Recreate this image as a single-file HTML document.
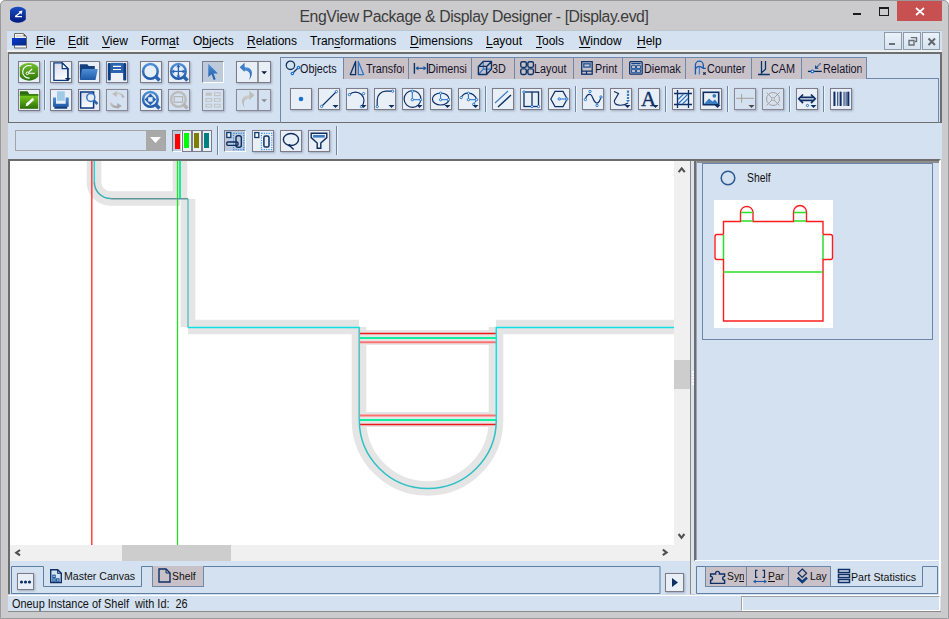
<!DOCTYPE html>
<html><head><meta charset="utf-8"><style>
*{box-sizing:border-box}
html,body{margin:0;padding:0;width:949px;height:619px;overflow:hidden;background:#fff}
body{font-family:"Liberation Sans",sans-serif;position:relative}
.a{position:absolute}
#frame{left:0;top:0;width:949px;height:619px;background:#cbcbcd;border:1px solid #9a9a9c;border-radius:5px 5px 0 0}
#title{left:299.5px;top:8px;font-size:15.8px;color:#3c3c3c;letter-spacing:-0.42px;white-space:nowrap}
.mb{top:34px;font-size:12px;color:#000;line-height:14px}
.mb u{text-decoration:underline;text-decoration-thickness:1px;text-underline-offset:1.5px}
#menubar{left:7px;top:30px;width:935px;height:22px;background:#d3e1f0;border-top:1px solid #bcc4cc}
#menubar:after{content:"";position:absolute;left:0;top:19px;width:100%;height:2px;background:#eef0f2}
.mdi{top:32px;width:18px;height:18px;border:1px solid #8e9aa8;background:linear-gradient(#eaf2fa,#d6e3f0)}
#tb1{left:8px;top:52px;width:934px;height:71px;background:#d3e1f0;border-top:2px solid #6e6e6e;border-left:1px solid #6e6e6e;border-right:2px solid #6e6e6e;border-bottom:1px solid #6e6e6e}
#tb2{left:8px;top:123px;width:934px;height:36px;background:#d3e1f0}
.btn{width:22px;height:22px;border:1px solid #7d7b88;background:#e8eff7;box-shadow:1px 1px 2px rgba(60,60,90,.32)}
.dis{background:#d3e1f0;border-color:#8a8894}
.prs{background:#bdcadb;border-top:1px solid #7d7b88;border-left:1px solid #7d7b88;border-right:1px solid #fff;border-bottom:1px solid #fff;box-shadow:none}
.sep{width:2px;background:#6f87a6;border-right:1px solid #eef3f8}
.btn svg{position:absolute;left:0;top:0}
.tab{top:57px;height:22px;background:#c9c1c8;border:1px solid #6d88a8;border-bottom:none;font-size:11.5px;color:#1a1a2a;white-space:nowrap;overflow:hidden}
.tabt{top:61px;height:16px;font-size:12px;color:#141428;white-space:nowrap;overflow:hidden;line-height:16px;transform:scaleX(0.9);transform-origin:0 0}
.tab svg{position:absolute;top:3px}
#canvas{left:9px;top:159px;width:682px;height:403px;background:#fff;border-top:2px solid #6e6e6e;border-left:1px solid #6e6e6e}
#rp{left:694px;top:159px;width:247px;height:402px;background:#d3e1f0}
.tabb{height:21px;background:#c9c1c8;border:1px solid #6d88a8;border-top:none;font-size:11px;color:#1a1a2a;white-space:nowrap;overflow:hidden}
.tabb span{position:absolute;top:4px}
</style></head><body>
<div id="frame" class="a"></div>
<div id="title" class="a">EngView Package &amp; Display Designer - [Display.evd]</div>
<svg class="a" style="left:9px;top:6px" width="18" height="18" viewBox="0 0 18 18">
<defs><linearGradient id="gi" x1="0" y1="0" x2="0" y2="1"><stop offset="0" stop-color="#1a4cc0"/><stop offset="1" stop-color="#001a80"/></linearGradient></defs>
<path d="M1 4A11.3 11.3 0 0 1 16.8 4V13.6A11.3 11.3 0 0 1 1 13.6Z" fill="url(#gi)"/><path d="M6.2 10.6L11.4 6.6M6 10.6H13" stroke="#fff" stroke-width="1.3" fill="none"/><path d="M13.4 4.6L9.6 5.5 12.5 8.4z" fill="#fff"/></svg>
<div class="a" style="left:853px;top:13px;width:8px;height:2px;background:#1a1a1a"></div>
<div class="a" style="left:879px;top:7px;width:10px;height:9px;border:1px solid #1a1a1a;border-top-width:2px"></div>
<div class="a" style="left:897px;top:1px;width:45px;height:20px;background:#c75050"></div>
<svg class="a" style="left:914px;top:6px" width="12" height="11"><path d="M2 2l8 7M10 2l-8 7" stroke="#fff" stroke-width="1.7"/></svg>

<div id="menubar" class="a"></div>
<svg class="a" style="left:12px;top:33px" width="17" height="16" viewBox="0 0 17 16">
<path d="M2.5 0.5h9l3 3v11.5h-12z" fill="#f4f4f4" stroke="#6a6a6a"/>
<path d="M11.5 0.5v3h3z" fill="#555"/>
<rect x="4" y="2" width="7" height="2" fill="#d8d8d8"/>
<defs><linearGradient id="gm" x1="0" y1="0" x2="1" y2="1"><stop offset="0" stop-color="#0a3ad0"/><stop offset="1" stop-color="#062a80"/></linearGradient></defs>
<rect x="0" y="5" width="14" height="7.5" fill="url(#gm)"/>
</svg>
<div class="a mb" style="left:36px"><u>F</u>ile</div>
<div class="a mb" style="left:68px"><u>E</u>dit</div>
<div class="a mb" style="left:102px"><u>V</u>iew</div>
<div class="a mb" style="left:141px">Form<u>a</u>t</div>
<div class="a mb" style="left:193px">O<u>b</u>jects</div>
<div class="a mb" style="left:247px"><u>R</u>elations</div>
<div class="a mb" style="left:310px">Tran<u>s</u>formations</div>
<div class="a mb" style="left:410px"><u>D</u>imensions</div>
<div class="a mb" style="left:486px"><u>L</u>ayout</div>
<div class="a mb" style="left:536px"><u>T</u>ools</div>
<div class="a mb" style="left:579px"><u>W</u>indow</div>
<div class="a mb" style="left:637px"><u>H</u>elp</div>
<div class="a mdi" style="left:884px"><div class="a" style="left:4px;top:10px;width:6px;height:2px;background:#6a6f78"></div></div>
<div class="a mdi" style="left:903px"><svg class="a" style="left:4px;top:4px" width="10" height="10"><path d="M3.5 1v-0.5h5v4h-1.5M1 3.5h5v4.5h-5z" fill="none" stroke="#6a6f78" stroke-width="1.4"/></svg></div>
<div class="a mdi" style="left:922px"><svg class="a" style="left:4px;top:4px" width="10" height="10"><path d="M1.5 1.5l6.5 6.5M8 1.5l-6.5 6.5" stroke="#5f646c" stroke-width="1.9"/></svg></div>
<div id="tb1" class="a"></div><div id="tb2" class="a"></div>
<svg class="a" width="0" height="0" style="left:0;top:0"><defs><linearGradient id="gB" x1="0" y1="0" x2="0" y2="1"><stop offset="0" stop-color="#4f8fd6"/><stop offset="1" stop-color="#1f5aa8"/></linearGradient><linearGradient id="gG" x1="0" y1="0" x2="0" y2="1"><stop offset="0" stop-color="#74c22e"/><stop offset="1" stop-color="#2a7208"/></linearGradient><linearGradient id="gG2" x1="0" y1="0" x2="0" y2="1"><stop offset="0" stop-color="#7ad21e"/><stop offset="1" stop-color="#2b6e06"/></linearGradient><linearGradient id="gP" x1="0" y1="0" x2="0.3" y2="1"><stop offset="0" stop-color="#d6d8ec"/><stop offset="1" stop-color="#fafbff"/></linearGradient><linearGradient id="gS" x1="0" y1="0" x2="0" y2="1"><stop offset="0" stop-color="#cfcfcf"/><stop offset="1" stop-color="#a9a9a9"/></linearGradient></defs></svg>
<div class="a btn " style="left:18px;top:61px;width:22px"><svg width="20" height="20" viewBox="0 0 20 20"><path d="M0.8 5.3A11.9 11.9 0 0 1 19.2 5.3V14.4A11.9 11.9 0 0 1 0.8 14.4Z" fill="url(#gG)"/><path d="M12.6 4.1A6.3 6.3 0 1 0 10.6 16.1" fill="none" stroke="#fff" stroke-width="1.1"/><path d="M8.6 11.2L13.2 7M8.6 11.2H15.8" stroke="#fff" stroke-width="1.1"/><circle cx="8.4" cy="11.3" r="1.3" fill="#4a9a18" stroke="#fff" stroke-width="1"/></svg></div>
<div class="a btn " style="left:18px;top:89px;width:22px"><svg width="20" height="20" viewBox="0 0 20 20"><path d="M0.9 1.3h7.6l1.8 2.6h8.9v2.4H0.9z" fill="#2c6a0c"/><rect x="0.9" y="4.6" width="18.3" height="14.2" fill="url(#gG2)"/><rect x="0.9" y="4.4" width="18.3" height="1.3" fill="#2f6f0e"/><path d="M7.6 15L14.4 8.8" stroke="#fff" stroke-width="2.6"/><path d="M6.6 16.2l0.6-2 1.5 1.4z" fill="#fff"/></svg></div>
<div class="a sep" style="left:44px;top:60px;height:50px"></div>
<div class="a btn " style="left:50px;top:61px;width:22px"><svg width="20" height="20" viewBox="0 0 20 20"><path d="M2.9 0.9h8.3l5.7 5.7v11.8H2.9z" fill="url(#gP)" stroke="#0d3a7e" stroke-width="1.3"/><path d="M11.2 0.9v5.7h5.7z" fill="#fff" stroke="#0d3a7e" stroke-width="1.2"/><path d="M16.9 6.6v10" stroke="#0d3a7e" stroke-width="1.3"/><path d="M13.8 16h6.2l-3.1 3z" fill="#0d2a5e"/></svg></div>
<div class="a btn " style="left:78px;top:61px;width:22px"><svg width="20" height="20" viewBox="0 0 20 20"><path d="M0.9 2.2h7.4l1.5 1.8h6v3.5H0.9z" fill="#14407f"/><path d="M0.9 4h3v13H0.9z" fill="#14407f"/><path d="M3.1 7h15.7l-2.3 10.9H1z" fill="url(#gB)"/></svg></div>
<div class="a btn " style="left:106px;top:61px;width:22px"><svg width="20" height="20" viewBox="0 0 20 20"><rect x="0.8" y="0.9" width="3.1" height="17.5" rx="1" fill="#0f3f86"/><rect x="16.1" y="0.9" width="3.1" height="17.5" rx="1" fill="#0f3f86"/><rect x="3.9" y="0.9" width="12.2" height="10.1" fill="#2a64b0"/><path d="M6 4.4h8M6 7.5h8" stroke="#fff" stroke-width="1.2"/><rect x="3.9" y="11" width="12.2" height="7.4" fill="#eef2f8"/></svg></div>
<div class="a btn " style="left:50px;top:89px;width:22px"><svg width="20" height="20" viewBox="0 0 20 20"><rect x="6" y="1.3" width="7.8" height="9.5" fill="#9fcbe6"/><path d="M2 7.4h3v6.3h9.7V7.4h3v9.4H2z" fill="url(#gB)"/><rect x="3.4" y="16.4" width="12.8" height="2.3" fill="#0d3a80"/></svg></div>
<div class="a btn " style="left:78px;top:89px;width:22px"><svg width="20" height="20" viewBox="0 0 20 20"><rect x="1.6" y="2" width="13" height="16" fill="url(#gP)" stroke="#0d3a7e" stroke-width="1.5"/><circle cx="11.8" cy="7.4" r="4" fill="#e8eef8" stroke="#3a78c0" stroke-width="1.5"/><path d="M14.8 10.4l3.6 3.6" stroke="#2a64b0" stroke-width="2.6"/></svg></div>
<div class="a btn dis" style="left:106px;top:89px;width:22px"><svg width="20" height="20" viewBox="0 0 20 20"><path d="M16.4 7.4C15 3.6 11.5 2.6 8.6 3.6" fill="none" stroke="url(#gS)" stroke-width="2.4"/><path d="M5.2 4.1l4.6-3.2v6.2z" fill="#bdbdbd"/><path d="M3.6 12.6C5 16.4 8.5 17.4 11.4 16.4" fill="none" stroke="url(#gS)" stroke-width="2.4"/><path d="M14.8 15.9l-4.6 3.2v-6.2z" fill="#a9a9a9"/></svg></div>
<div class="a btn " style="left:140px;top:61px;width:22px"><svg width="20" height="20" viewBox="0 0 20 20"><circle cx="9.4" cy="9.4" r="7.3" fill="#e6eef8" stroke="url(#gB)" stroke-width="2.5"/><path d="M14.3 14.3l4.2 4.2" stroke="#2a64b0" stroke-width="3.6"/></svg></div>
<div class="a btn " style="left:168px;top:61px;width:22px"><svg width="20" height="20" viewBox="0 0 20 20"><circle cx="9.4" cy="9.4" r="7.3" fill="#e6eef8" stroke="url(#gB)" stroke-width="2.5"/><path d="M14.3 14.3l4.2 4.2" stroke="#2a64b0" stroke-width="3.6"/><path d="M9.4 3.5v12M3.5 9.4h12" stroke="#2a64b0" stroke-width="1.3"/><path d="M9.4 2.6l-2 2.6h4zM9.4 16.2l-2-2.6h4zM2.6 9.4l2.6-2v4zM16.2 9.4l-2.6-2v4z" fill="#2a64b0"/></svg></div>
<div class="a btn " style="left:140px;top:89px;width:22px"><svg width="20" height="20" viewBox="0 0 20 20"><circle cx="9.4" cy="9.4" r="7.3" fill="#e6eef8" stroke="url(#gB)" stroke-width="2.5"/><path d="M14.3 14.3l4.2 4.2" stroke="#2a64b0" stroke-width="3.6"/><path d="M9.4 3.6l5.8 5.8-5.8 5.8-5.8-5.8z" fill="#2a64b0"/><rect x="7.2" y="7.2" width="4.4" height="4.4" fill="#e6eef8"/></svg></div>
<div class="a btn dis" style="left:168px;top:89px;width:22px"><svg width="20" height="20" viewBox="0 0 20 20"><circle cx="9.4" cy="9.4" r="7.3" fill="none" stroke="#bdbdbd" stroke-width="2.5"/><path d="M14.3 14.3l4.2 4.2" stroke="#b3b3b3" stroke-width="3.6"/><rect x="5.2" y="6.6" width="8.4" height="5.6" fill="none" stroke="#b5b5b5" stroke-width="1.2"/></svg></div>
<div class="a btn prs" style="left:202px;top:61px;width:22px"><svg width="20" height="20" viewBox="0 0 20 20"><path d="M5.3 1.8L14.9 11.4H10.6L12.6 17.2L10.7 18L8.6 12.3L5.3 14.9z" fill="url(#gB)"/></svg></div>
<div class="a btn dis" style="left:202px;top:89px;width:22px"><svg width="20" height="20" viewBox="0 0 20 20"><rect x="2.6" y="2.6" width="6.2" height="3.2" fill="#c2c2c2"/><path d="M11.5 2.8h5.6v2.8h-5.6zM3 8.5h5.6v2.8H3zM11.5 8.5h5.6v2.8h-5.6zM3 14.2h5.6v2.8H3zM11.5 14.2h5.6v2.8h-5.6z" fill="none" stroke="#c2c2c2" stroke-width="1.1"/></svg></div>
<div class="a btn" style="left:236px;top:61px;width:35px"><svg width="33" height="20"><path d="M7 5.3C12 4.5 16.5 8 14.5 13.5 13.8 15.5 12.8 17 12.2 18 14.5 11.5 11.8 8 7 8.6z" fill="url(#gB)"/><path d="M2.6 5.3L7.6 0.8V10z" fill="#3e7cc6"/><path d="M21 0v20" stroke="#7d7b88" stroke-width="1.5"/><path d="M24.3 9.2h5.8l-2.9 3z" fill="#0a1a40"/></svg></div>
<div class="a btn dis" style="left:236px;top:89px;width:35px"><svg width="33" height="20"><path d="M13 5.3C8 4.5 3.5 8 5.5 13.5 6.2 15.5 7.2 17 7.8 18 5.5 11.5 8.2 8 13 8.6z" fill="url(#gS)"/><path d="M17.4 5.3L12.4 0.8V10z" fill="#bdbdbd"/><path d="M21 0v20" stroke="#8a8894" stroke-width="1.5"/><path d="M24.3 9.2h5.8l-2.9 3z" fill="#8c8a8a"/></svg></div>
<div class="a" style="left:280px;top:78px;width:659px;height:45px;border:1px solid #6d88a8;border-bottom:none"></div>
<div class="a tab" style="left:280px;width:64px;height:22px;background:#d3e1f0"></div>
<svg class="a" style="left:284px;top:58px" width="20" height="20"><circle cx="6.45" cy="7.3" r="4.2" fill="none" stroke="#17385e" stroke-width="1.3"/><path d="M8.4 15.5L14.5 9.5" stroke="#17385e" stroke-width="1.2"/><circle cx="8.4" cy="15.5" r="1.2" fill="#fff" stroke="#1a70d8" stroke-width="1.2"/><circle cx="14.5" cy="9.5" r="1.2" fill="#fff" stroke="#1a70d8" stroke-width="1.2"/></svg>
<div class="a tabt" style="left:300.2px;width:42.8px">Objects</div>
<div class="a tab" style="left:343px;width:66px;height:22px"></div>
<svg class="a" style="left:348px;top:58px" width="20" height="20"><path d="M2.3 16.6L7.6 3.4V16.6z" fill="none" stroke="#0b3368" stroke-width="1.3" stroke-linejoin="round"/><path d="M10.3 3.4V16.6H15.6z" fill="none" stroke="#2f78c8" stroke-width="1.3" stroke-linejoin="round"/></svg>
<div class="a tabt" style="left:365.8px;width:42.1px">Transfor</div>
<div class="a tab" style="left:408px;width:64px;height:22px"></div>
<svg class="a" style="left:412px;top:58px" width="20" height="20"><path d="M2.4 5V15.8M15.5 5V15.8" stroke="#0b3368" stroke-width="1.4"/><path d="M4 10.3H14" stroke="#1d5a9a" stroke-width="1.3"/><path d="M3.4 10.3l3-2.2v4.4zM14.5 10.3l-3-2.2v4.4z" fill="#1d5a9a"/></svg>
<div class="a tabt" style="left:428.4px;width:42.6px">Dimensi</div>
<div class="a tab" style="left:471px;width:44px;height:22px"></div>
<svg class="a" style="left:476px;top:58px" width="20" height="20"><path d="M7.3 3.4V11.1H15.5M7.3 11.1L2.4 16.5" fill="none" stroke="#2f78c8" stroke-width="1.2"/><path d="M2.4 8.4h8.2v8.1H2.4zM2.4 8.4L7.3 3.4h8.2v7.7L10.6 16.5M10.6 8.4l4.9-5" fill="none" stroke="#0b3368" stroke-width="1.4" stroke-linejoin="round"/></svg>
<div class="a tabt" style="left:491.9px;width:19.8px">3D</div>
<div class="a tab" style="left:514px;width:60px;height:22px"></div>
<svg class="a" style="left:518px;top:58px" width="20" height="20"><rect x="2.75" y="3.75" width="5.6" height="5.6" rx="1.6" fill="none" stroke="#0b3368" stroke-width="1.4"/><rect x="9.85" y="3.75" width="5.6" height="5.6" rx="1.6" fill="none" stroke="#0b3368" stroke-width="1.4"/><rect x="2.75" y="10.85" width="5.6" height="5.6" rx="1.6" fill="none" stroke="#0b3368" stroke-width="1.4"/><rect x="9.85" y="10.85" width="5.6" height="5.6" rx="1.6" fill="none" stroke="#0b3368" stroke-width="1.4"/></svg>
<div class="a tabt" style="left:533.9000000000001px;width:38.7px">Layout</div>
<div class="a tab" style="left:573px;width:50px;height:22px"></div>
<svg class="a" style="left:578px;top:58px" width="20" height="20"><rect x="3.7" y="3.7" width="10.5" height="12.5" fill="none" stroke="#0b3368" stroke-width="1.3"/><rect x="5.8" y="5.8" width="6.3" height="3.3" fill="none" stroke="#1a5aa0" stroke-width="1.3"/><path d="M3.7 13.2H14.2M8.5 13.2V16.2" stroke="#0b3368" stroke-width="1.2"/></svg>
<div class="a tabt" style="left:594.6px;width:25.7px">Print</div>
<div class="a tab" style="left:622px;width:64px;height:22px"></div>
<svg class="a" style="left:627px;top:58px" width="20" height="20"><rect x="2.7" y="3.7" width="12.5" height="12.5" rx="1" fill="none" stroke="#0b3368" stroke-width="1.3"/><path d="M4.3 5.5H13.7" stroke="#114a8a" stroke-width="1.1"/><rect x="4.5" y="7.2" width="4" height="3.5" rx="1" fill="none" stroke="#1a5aa0" stroke-width="1.1"/><rect x="9.5" y="7.2" width="4" height="3.5" rx="1" fill="none" stroke="#1a5aa0" stroke-width="1.1"/><rect x="4.5" y="11.3" width="4" height="3.5" rx="1" fill="none" stroke="#1a5aa0" stroke-width="1.1"/><rect x="9.5" y="11.3" width="4" height="3.5" rx="1" fill="none" stroke="#1a5aa0" stroke-width="1.1"/></svg>
<div class="a tabt" style="left:643.9000000000001px;width:40.9px">Diemaki</div>
<div class="a tab" style="left:685px;width:67px;height:22px"></div>
<svg class="a" style="left:692px;top:58px" width="20" height="20"><path d="M3.4 16.5V7.2A3.95 4 0 0 1 11.3 7.2V10.3H13.8" fill="none" stroke="#1a58a8" stroke-width="1.3"/><path d="M3.8 10.5C5 8.6 6 8.4 7.4 8.4 8.8 8.4 10 9.4 11 10.3" fill="none" stroke="#1a58a8" stroke-width="1.2"/><path d="M7.4 8.6V16.5" stroke="#3a82d0" stroke-width="1.2"/><path d="M11.3 14.3l2.4 2.4M13.7 14.3l-2.4 2.4" stroke="#0a2040" stroke-width="1.1"/></svg>
<div class="a tabt" style="left:706.7px;width:44.4px">Counter</div>
<div class="a tab" style="left:751px;width:51px;height:22px"></div>
<svg class="a" style="left:755px;top:58px" width="20" height="20"><path d="M6.5 3.1V16.5M10.5 3.1V11.3L6.5 14.8M3 16.5H14.8" fill="none" stroke="#0b3368" stroke-width="1.3"/></svg>
<div class="a tabt" style="left:771.2px;width:28.3px">CAM</div>
<div class="a tab" style="left:801px;width:66px;height:22px"></div>
<svg class="a" style="left:805px;top:58px" width="20" height="20"><path d="M2.9 13.4H16.8" stroke="#0a2a50" stroke-width="1.3"/><path d="M15.6 5.3L11.3 9.6" stroke="#114a8a" stroke-width="1.2" stroke-dasharray="1.3 0.5"/><path d="M10 10.8V7l3.8 3.8z" fill="#114a8a"/><circle cx="7.4" cy="13.4" r="1.3" fill="#fff" stroke="#1a70d8" stroke-width="1.2"/></svg>
<div class="a tabt" style="left:822.8000000000001px;width:43.2px">Relation</div>
<div class="a btn " style="left:290px;top:88px;width:22px"><svg width="20" height="20" viewBox="0 0 20 20"><circle cx="10" cy="10" r="2.3" fill="#1a6fd0"/></svg></div>
<div class="a btn " style="left:318px;top:88px;width:22px"><svg width="20" height="20" viewBox="0 0 20 20"><path d="M3 17L17 3" stroke="#0e2f66" stroke-width="1.1"/><circle cx="2.6" cy="17.4" r="1.15" fill="#fff" stroke="#1a6fd0" stroke-width="0.95"/><circle cx="17.4" cy="2.6" r="1.15" fill="#fff" stroke="#1a6fd0" stroke-width="0.95"/><path d="M13.5 16h6l-3 3z" fill="#0e2f66"/></svg></div>
<div class="a btn " style="left:346px;top:88px;width:22px"><svg width="20" height="20" viewBox="0 0 20 20"><path d="M2.4 5.6A8.5 8.5 0 1 1 14.5 17.6" fill="none" stroke="#0e2f66" stroke-width="1.2"/><circle cx="2.4" cy="5.6" r="1.15" fill="#fff" stroke="#1a6fd0" stroke-width="0.95"/><circle cx="16.6" cy="4.6" r="1.15" fill="#fff" stroke="#1a6fd0" stroke-width="0.95"/><circle cx="14.5" cy="17.6" r="1.15" fill="#fff" stroke="#1a6fd0" stroke-width="0.95"/><path d="M13.5 16h6l-3 3z" fill="#0e2f66"/></svg></div>
<div class="a btn " style="left:374px;top:88px;width:22px"><svg width="20" height="20" viewBox="0 0 20 20"><path d="M2.2 17.6V11A8.8 8.8 0 0 1 11 2.2h6.6" fill="none" stroke="#0e2f66" stroke-width="1.2"/><circle cx="2.2" cy="17.6" r="1.15" fill="#fff" stroke="#1a6fd0" stroke-width="0.95"/><circle cx="17.6" cy="2.2" r="1.15" fill="#fff" stroke="#1a6fd0" stroke-width="0.95"/><path d="M13.5 16h6l-3 3z" fill="#0e2f66"/></svg></div>
<div class="a btn " style="left:402px;top:88px;width:22px"><svg width="20" height="20" viewBox="0 0 20 20"><circle cx="9.5" cy="10" r="8.4" fill="none" stroke="#0e2f66" stroke-width="1.2"/><path d="M9.3 2.2V10.7h8.4" fill="none" stroke="#1a6fd0" stroke-width="1"/><circle cx="9.3" cy="2.2" r="1.15" fill="#fff" stroke="#1a6fd0" stroke-width="0.95"/><circle cx="9.3" cy="10.7" r="1.15" fill="#fff" stroke="#1a6fd0" stroke-width="0.95"/><circle cx="17.7" cy="10.7" r="1.15" fill="#fff" stroke="#1a6fd0" stroke-width="0.95"/><path d="M13.5 16h6l-3 3z" fill="#0e2f66"/></svg></div>
<div class="a btn " style="left:430px;top:88px;width:22px"><svg width="20" height="20" viewBox="0 0 20 20"><ellipse cx="9.7" cy="10" rx="8.3" ry="6" fill="none" stroke="#0e2f66" stroke-width="1.2"/><path d="M9.6 4.2V10.7h7.9" fill="none" stroke="#1a6fd0" stroke-width="1"/><circle cx="9.6" cy="4.2" r="1.15" fill="#fff" stroke="#1a6fd0" stroke-width="0.95"/><circle cx="9.6" cy="10.7" r="1.15" fill="#fff" stroke="#1a6fd0" stroke-width="0.95"/><circle cx="17.5" cy="10.7" r="1.15" fill="#fff" stroke="#1a6fd0" stroke-width="0.95"/><path d="M13.5 16h6l-3 3z" fill="#0e2f66"/></svg></div>
<div class="a btn " style="left:458px;top:88px;width:22px"><svg width="20" height="20" viewBox="0 0 20 20"><path d="M2.2 8.6C4 5 7 4 9.4 4.2 13 4.4 16.5 7 17.6 10.7" fill="none" stroke="#0e2f66" stroke-width="1.2"/><path d="M9.4 4.2V10.7h8.2M17.6 10.7L14.7 15.3" fill="none" stroke="#1a6fd0" stroke-width="1"/><circle cx="2.2" cy="8.6" r="1.15" fill="#fff" stroke="#1a6fd0" stroke-width="0.95"/><circle cx="9.4" cy="4.2" r="1.15" fill="#fff" stroke="#1a6fd0" stroke-width="0.95"/><circle cx="9.4" cy="10.7" r="1.15" fill="#fff" stroke="#1a6fd0" stroke-width="0.95"/><circle cx="17.6" cy="10.7" r="1.15" fill="#fff" stroke="#1a6fd0" stroke-width="0.95"/><circle cx="14.7" cy="15.3" r="1.15" fill="#fff" stroke="#1a6fd0" stroke-width="0.95"/><path d="M13.5 16h6l-3 3z" fill="#0e2f66"/></svg></div>
<div class="a btn " style="left:492px;top:88px;width:22px"><svg width="20" height="20" viewBox="0 0 20 20"><path d="M2 14L15 2" stroke="#3a7cc0" stroke-width="1.1"/><path d="M5 18L18 6" stroke="#0e2f66" stroke-width="1.4"/></svg></div>
<div class="a btn " style="left:520px;top:88px;width:22px"><svg width="20" height="20" viewBox="0 0 20 20"><rect x="3" y="3" width="14.5" height="14.5" fill="none" stroke="#0e2f66" stroke-width="1.3"/><path d="M11 3v14.5" stroke="#0e2f66" stroke-width="1.3"/><circle cx="3" cy="3" r="1.15" fill="#fff" stroke="#1a6fd0" stroke-width="0.95"/><circle cx="11" cy="17.5" r="1.15" fill="#fff" stroke="#1a6fd0" stroke-width="0.95"/><circle cx="17.5" cy="17.5" r="1.15" fill="#fff" stroke="#1a6fd0" stroke-width="0.95"/></svg></div>
<div class="a btn " style="left:548px;top:88px;width:22px"><svg width="20" height="20" viewBox="0 0 20 20"><path d="M6 2.4h8l4.2 7.6-4.2 7.6H6L1.8 10z" fill="none" stroke="#0e2f66" stroke-width="1.2"/><path d="M10.2 10h7.5" stroke="#1a6fd0" stroke-width="1"/><circle cx="10.2" cy="10" r="1.15" fill="#fff" stroke="#1a6fd0" stroke-width="0.95"/><circle cx="17.8" cy="10" r="1.15" fill="#fff" stroke="#1a6fd0" stroke-width="0.95"/></svg></div>
<div class="a btn " style="left:582px;top:88px;width:22px"><svg width="20" height="20" viewBox="0 0 20 20"><path d="M2.4 10C3.5 6 5.5 4.8 7.5 5.5 10 6.5 10 13 13.5 14 15.5 14.5 17.5 11 17.8 8" fill="none" stroke="#0e2f66" stroke-width="1.2"/><circle cx="7" cy="2.5" r="1.15" fill="#fff" stroke="#1a6fd0" stroke-width="0.95"/><circle cx="2.4" cy="10.5" r="1.15" fill="#fff" stroke="#1a6fd0" stroke-width="0.95"/><circle cx="14" cy="16.5" r="1.15" fill="#fff" stroke="#1a6fd0" stroke-width="0.95"/><circle cx="18" cy="8" r="1.15" fill="#fff" stroke="#1a6fd0" stroke-width="0.95"/></svg></div>
<div class="a btn " style="left:610px;top:88px;width:22px"><svg width="20" height="20" viewBox="0 0 20 20"><path d="M3 2.5l4.5 2L3.5 11.5C2 17 12 17.5 17 14" fill="none" stroke="#0e2f66" stroke-width="1.2"/><path d="M17 1.5v9.5" stroke="#3a7cc0" stroke-width="2.2" stroke-dasharray="2.2 1"/><path d="M15 11h4l-2 2.5z" fill="#3a7cc0"/><path d="M13.5 16h6l-3 3z" fill="#0e2f66"/></svg></div>
<div class="a btn " style="left:638px;top:88px;width:22px"><svg width="20" height="20" viewBox="0 0 20 20"><text x="9.6" y="17.2" font-family="Liberation Serif" font-size="21" text-anchor="middle" fill="#0e2f66" stroke="#0e2f66" stroke-width="0.4">A</text><path d="M13.5 16h6l-3 3z" fill="#0e2f66"/></svg></div>
<div class="a btn " style="left:672px;top:88px;width:22px"><svg width="20" height="20" viewBox="0 0 20 20"><path d="M4.5 1v18M15.5 1v18M1 4.5h18M1 15.5h18" stroke="#0e2f66" stroke-width="1.3"/><path d="M5 10.5l5.5-5.5M5 15l10-10M9.5 15l5.5-5.5" stroke="#2f72c4" stroke-width="1.1"/></svg></div>
<div class="a btn " style="left:700px;top:88px;width:22px"><svg width="20" height="20" viewBox="0 0 20 20"><rect x="2.3" y="3.3" width="15.4" height="12.4" fill="#e8eef6" stroke="#0e2f66" stroke-width="1.6"/><path d="M3 15l5-5.5 3.5 3 2.5-2 3.5 4.5z" fill="#3a7cc0"/><circle cx="13.3" cy="6.8" r="1.9" fill="#3a7cc0"/><path d="M13.5 16h6l-3 3z" fill="#0e2f66"/></svg></div>
<div class="a btn dis" style="left:734px;top:88px;width:22px"><svg width="20" height="20" viewBox="0 0 20 20"><path d="M1.2 9.3h17.8M6.6 4.9v8.9" stroke="#a8a098" stroke-width="1"/><path d="M13.5 16h6l-3 3z" fill="#4a4a4a"/></svg></div>
<div class="a btn dis" style="left:762px;top:88px;width:22px"><svg width="20" height="20" viewBox="0 0 20 20"><circle cx="10" cy="10" r="6.5" fill="none" stroke="#a8a098" stroke-width="1"/><path d="M3.5 3.5l13 13M16.5 3.5l-13 13" stroke="#a8a098" stroke-width="1"/><rect x="8.8" y="8.8" width="2.4" height="2.4" fill="#e8eef6" stroke="#a8a098" stroke-width="0.8"/></svg></div>
<div class="a btn " style="left:796px;top:88px;width:22px"><svg width="20" height="20" viewBox="0 0 20 20"><path d="M6 5.5L1.8 9.8 6 14.1M14 5.5l4.2 4.3L14 14.1M2.5 8.3h15M2.5 11.3h15" fill="none" stroke="#0e2f66" stroke-width="1.7"/><circle cx="10.5" cy="16.5" r="1.1" fill="#fff" stroke="#1a6fd0" stroke-width="1"/><path d="M13.5 16h6l-3 3z" fill="#0e2f66"/></svg></div>
<div class="a btn " style="left:830px;top:88px;width:22px"><svg width="20" height="20" viewBox="0 0 20 20"><path d="M3.45 2.8v14.1M6.75 2.8v14.1M9.6 2.8v14.1M13.05 2.8v14.1M15.1 2.8v14.1M17.35 2.8v14.1" stroke="#0e2f66" stroke-width="1"/><path d="M3.45 2.8v14.1M9.6 2.8v14.1M17.35 2.8v14.1" stroke="#0e2f66" stroke-width="2"/></svg></div>
<div class="a sep" style="left:485px;top:86px;height:26px"></div>
<div class="a sep" style="left:575px;top:86px;height:26px"></div>
<div class="a sep" style="left:665px;top:86px;height:26px"></div>
<div class="a sep" style="left:727px;top:86px;height:26px"></div>
<div class="a sep" style="left:789px;top:86px;height:26px"></div>
<div class="a sep" style="left:823px;top:86px;height:26px"></div>
<div class="a" style="left:15px;top:130px;width:151px;height:21px;border:1px solid #a4a4a4;background:#d3e1f0"></div>
<div class="a" style="left:146px;top:131px;width:19px;height:19px;background:#a9a9a9"><svg class="a" style="left:4px;top:6px" width="11" height="7"><path d="M0 0h11l-5.5 6z" fill="#fff"/></svg></div>
<div class="a btn prs" style="left:172px;top:130px;width:10px;height:22px;box-shadow:none"><div class="a" style="left:2px;top:3px;width:5.3px;height:15.3px;background:#ff0000"></div></div>
<div class="a btn " style="left:182px;top:130px;width:10px;height:22px;box-shadow:none"><div class="a" style="left:1px;top:1.5px;width:5.3px;height:15.3px;background:#00ff00"></div></div>
<div class="a btn " style="left:192px;top:130px;width:10px;height:22px;box-shadow:none"><div class="a" style="left:1px;top:1.5px;width:5.3px;height:15.3px;background:#808000"></div></div>
<div class="a btn " style="left:202px;top:130px;width:10px;height:22px;box-shadow:none"><div class="a" style="left:1px;top:1.5px;width:5.3px;height:15.3px;background:#008080"></div></div>
<div class="a sep" style="left:217px;top:126px;height:29px"></div>
<div class="a btn prs" style="left:224px;top:130px;width:22px"><svg width="20" height="20" viewBox="0 0 20 20"><rect x="1.8" y="1.5" width="4" height="5" fill="#e6eef8" stroke="#0e3a70" stroke-width="1.3"/><path d="M8.5 2.4H18.8V18.6H8.5Z" fill="none" stroke="#2a8af0" stroke-width="1.1" stroke-dasharray="1.1 1.3"/><rect x="1.8" y="11" width="11.2" height="3.4" rx="1" fill="none" stroke="#0e2f5e" stroke-width="1.4"/><rect x="11" y="4.8" width="5.3" height="11.4" rx="2" fill="none" stroke="#0e2f5e" stroke-width="1.4"/></svg></div>
<div class="a btn " style="left:252px;top:130px;width:22px"><svg width="20" height="20" viewBox="0 0 20 20"><rect x="1.8" y="1.6" width="4" height="4.9" fill="#fff" stroke="#0e3a70" stroke-width="1.3"/><path d="M8.4 2.4H18.8V18.6H8.4Z" fill="none" stroke="#2a8af0" stroke-width="1.1" stroke-dasharray="1.1 1.3"/><rect x="10.9" y="5" width="5.1" height="11.1" rx="1.6" fill="none" stroke="#0e2f5e" stroke-width="1.5"/></svg></div>
<div class="a btn " style="left:280px;top:130px;width:22px"><svg width="20" height="20" viewBox="0 0 20 20"><ellipse cx="9.95" cy="8.45" rx="7.6" ry="6" fill="none" stroke="#0e2f5e" stroke-width="1.4"/><path d="M8.2 14.2L12.7 18.5" stroke="#0e2f5e" stroke-width="1.4"/><circle cx="8.4" cy="14.2" r="1.3" fill="#0e2f5e"/></svg></div>
<div class="a btn " style="left:308px;top:130px;width:22px"><svg width="20" height="20" viewBox="0 0 20 20"><path d="M2.2 2.2H17.8V6.6L11.8 12V17.2H8.2V12L2.2 6.6Z" fill="none" stroke="#0e2f5e" stroke-width="1.4"/><rect x="4.1" y="4" width="11.7" height="2.6" fill="#3a78c0"/></svg></div>
<div class="a sep" style="left:336px;top:126px;height:29px"></div>
<div class="a" style="left:8px;top:159px;width:686px;height:403px;background:#fff;border-top:2px solid #6c6c6c;border-left:2px solid #6c6c6c"></div>
<svg class="a" style="left:10px;top:161px" width="664" height="384" viewBox="10 161 664 384"><g stroke="#e5e5e5" stroke-width="14.6" fill="none" stroke-linecap="butt"><path d="M94 161V182A16.5 16.5 0 0 0 110.5 198.5"/><path d="M110 198.5H180"/><path d="M180 161V199"/><path d="M188 199V327"/><path d="M188 327H359"/><path d="M359 327V420"/><path d="M359 420A68.5 68.5 0 0 0 496 420"/><path d="M496 420V327"/><path d="M496 327H674"/></g><rect x="360" y="330" width="136" height="15" fill="#e5e5e5"/><rect x="360" y="412" width="136" height="15" fill="#e5e5e5"/><path d="M91.8 161V545" stroke="#ff4040" stroke-width="1.5"/><path d="M177.5 161V545" stroke="#20e020" stroke-width="1.3"/><path d="M180 161V199" stroke="#10f090" stroke-width="2"/><path d="M360 333.5H496" stroke="#f01818" stroke-width="1.5"/><path d="M360 338H496" stroke="#10f0a0" stroke-width="2.2"/><path d="M360 342.3H496" stroke="#ff7070" stroke-width="2"/><path d="M360 415.5H496" stroke="#ff7070" stroke-width="2"/><path d="M360 420H496" stroke="#10f0a0" stroke-width="2.2"/><path d="M360 424.5H496" stroke="#f01818" stroke-width="1.5"/><path d="M94.3 161V182" fill="none" stroke="#20d8dc" stroke-width="1.5"/><path d="M94.3 182A16.5 16.5 0 0 0 110.8 198.5" fill="none" stroke="#3aaeb2" stroke-width="1.5"/><path d="M110.8 198.8H188" fill="none" stroke="#5e9799" stroke-width="1.5"/><path d="M188 198.8V327.5" fill="none" stroke="#3cbcc0" stroke-width="1.2"/><path d="M188 327.5H359.3V420M496.3 420V327.5H674" fill="none" stroke="#12e0e4" stroke-width="1.5"/><path d="M358.6 327.5V420" fill="none" stroke="#ff9090" stroke-width="0.6"/><path d="M359.3 420A68.5 68.5 0 0 0 496.3 420" fill="none" stroke="#2ec0c4" stroke-width="1.5"/></svg>
<div class="a" style="left:674px;top:161px;width:16px;height:384px;background:#f0f0f0"></div>
<div class="a" style="left:674px;top:360px;width:16px;height:29px;background:#cdcdcd"></div>
<svg class="a" style="left:676px;top:165px" width="12" height="10"><path d="M2.6 7.2L5.7 3.4 8.8 7.2" fill="none" stroke="#505050" stroke-width="2.1"/></svg>
<svg class="a" style="left:676px;top:530px" width="12" height="10"><path d="M2.6 4L5.5 7.8 8.4 4" fill="none" stroke="#505050" stroke-width="2.1"/></svg>
<div class="a" style="left:10px;top:545px;width:680px;height:16px;background:#f0f0f0"></div>
<div class="a" style="left:122px;top:545px;width:109px;height:16px;background:#cdcdcd"></div>
<svg class="a" style="left:13px;top:547px" width="10" height="12"><path d="M7 3L3.2 5.7 7 8.4" fill="none" stroke="#505050" stroke-width="2.1"/></svg>
<svg class="a" style="left:659px;top:547px" width="10" height="12"><path d="M3.8 2.7L7.6 5.4 3.8 8.1" fill="none" stroke="#505050" stroke-width="2.1"/></svg>
<div class="a" style="left:690px;top:161px;width:7px;height:433px;background:#dde4ee;border-left:1px solid #8a8a8a"></div>
<div class="a" style="left:692px;top:371px;width:2px;height:2px;background:#fafcff"></div>
<div class="a" style="left:692px;top:374px;width:2px;height:2px;background:#fafcff"></div>
<div class="a" style="left:692px;top:377px;width:2px;height:2px;background:#fafcff"></div>
<div class="a" style="left:692px;top:380px;width:2px;height:2px;background:#fafcff"></div>
<div class="a" style="left:692px;top:383px;width:2px;height:2px;background:#fafcff"></div>
<div class="a" style="left:694px;top:159px;width:247px;height:402px;background:#d3e1f0;border-top:2px solid #6e6e6e;border-left:2px solid #6e6e6e;border-right:2px solid #fff;border-bottom:1px solid #fff"><div class="a" style="left:0;top:0;width:243px;height:2px;background:#8e8e8e"></div><div class="a" style="left:0;top:0;width:1px;height:399px;background:#9aa4b0"></div></div>
<div class="a" style="left:702px;top:163px;width:231px;height:177px;border:1px solid #6a86a8;border-top-width:1px"></div>
<svg class="a" style="left:719px;top:169px" width="18" height="18"><circle cx="9" cy="9" r="6.8" fill="none" stroke="#2a5a90" stroke-width="1.5"/></svg>
<div class="a" style="left:746.5px;top:170.5px;font-size:12.5px;color:#111;transform:scaleX(0.83);transform-origin:0 0">Shelf</div>
<svg class="a" style="left:0;top:0" width="949" height="619"><rect x="714" y="200" width="119" height="128" fill="#fff"/><g fill="none" stroke="#ff1c1c" stroke-width="1.4"><path d="M723.5 234.5V221.5H740.5V212A6.3 6.3 0 0 1 753 212V221.5H793.5V212A6.3 6.3 0 0 1 806.5 212V221.5H823V234.5"/><path d="M723.5 234.5H717A2 2 0 0 0 715 236.5V257.5A2 2 0 0 0 717 259.5H723.5V321H823V259.5H830.5A2 2 0 0 0 832.5 257.5V236.5A2 2 0 0 0 830.5 234.5H823"/></g><g stroke="#28e028" stroke-width="1.5"><path d="M723.5 272H823M723.5 235V259M823 235V259M741 212.5H753M741 221H753M794 212.5H806M794 221H806"/></g></svg>
<div class="a" style="left:8px;top:159px;width:2px;height:435px;background:#6c6c6c"></div>
<div class="a" style="left:10px;top:561px;width:680px;height:34px;background:#d3e1f0"></div>
<svg class="a" style="left:0;top:0" width="949" height="619"><path d="M11.5 593.5V566.5H43.5V586.5H141.5V566.5H660V593.5H11.5" fill="none" stroke="#5f7fa2"/></svg>
<div class="a tabb" style="left:152px;top:566px;width:52px;height:21px;border-top:none"><svg class="a" style="left:5px;top:2px" width="13" height="15"><path d="M1 1h7l4 4v9H1z" fill="none" stroke="#0e2f66" stroke-width="1.4"/><path d="M8 1v4h4" fill="none" stroke="#0e2f66"/></svg><span style="left:19px;top:3.5px;font-size:11.5px;color:#111;transform:scaleX(0.9);transform-origin:0 0">Shelf</span></div>
<div class="a btn" style="left:17px;top:573px;width:17px;height:17px"><svg width="15" height="15"><circle cx="3.5" cy="8" r="1.6" fill="#0e2f66"/><circle cx="7.5" cy="8" r="1.6" fill="#0e2f66"/><circle cx="11.5" cy="8" r="1.6" fill="#0e2f66"/></svg></div>
<svg class="a" style="left:49px;top:568px" width="14" height="16"><path d="M1.7 1.7h7l3.6 3.6v9.2H1.7z" fill="none" stroke="#0e2f66" stroke-width="1.4"/><path d="M8.7 1.7v3.6h3.6" fill="none" stroke="#0e2f66" stroke-width="1.1"/><rect x="3.8" y="7.2" width="2.4" height="2.4" fill="none" stroke="#0e4a9a" stroke-width="1"/><rect x="3.8" y="10.8" width="2.4" height="2.4" fill="none" stroke="#0e4a9a" stroke-width="1"/><rect x="7.6" y="10.8" width="2.4" height="2.4" fill="none" stroke="#0e4a9a" stroke-width="1"/></svg>
<div class="a" style="left:63.5px;top:570px;font-size:11.5px;color:#111;transform:scaleX(0.92);transform-origin:0 0;white-space:nowrap">Master Canvas</div>
<div class="a btn" style="left:665px;top:573px;width:19px;height:19px"><svg width="17" height="17"><path d="M6 4l6 4.5-6 4.5z" fill="#0e2f66"/></svg></div>
<div class="a" style="left:695px;top:560px;width:246px;height:35px;background:#d3e1f0;border-top:1px solid #fff;border-right:2px solid #fff"></div>
<svg class="a" style="left:0;top:0" width="949" height="619"><path d="M696.5 593.5V566.5H705.5M830.5 586.5H922.5V566.5H937.5V593.5H696.5" fill="none" stroke="#5f7fa2"/></svg>
<div class="a tabb" style="left:705px;top:566px;width:42px;height:21px;border-top:1px solid #6d88a8"><span style="left:21px;top:2.5px;font-size:11.5px;color:#111;width:18.9px;overflow:hidden;height:16px;transform:scaleX(0.9);transform-origin:0 0">Sy<u>n</u></span></div>
<div class="a tabb" style="left:746px;top:566px;width:43px;height:21px;border-top:1px solid #6d88a8"><span style="left:21px;top:2.5px;font-size:11.5px;color:#111;width:20.0px;overflow:hidden;height:16px;transform:scaleX(0.9);transform-origin:0 0"><u>P</u>ar</span></div>
<div class="a tabb" style="left:788px;top:566px;width:43px;height:21px;border-top:1px solid #6d88a8"><span style="left:21px;top:2.5px;font-size:11.5px;color:#111;width:20.0px;overflow:hidden;height:16px;transform:scaleX(0.9);transform-origin:0 0">Lay</span></div>
<svg class="a" style="left:0;top:0" width="949" height="619"><path d="M710.6 574H715.6A2 2 0 1 1 719.4 574H724.6V576.4A1.9 1.9 0 1 0 724.6 580.2V583.4H710.6V580.2A1.9 1.9 0 1 0 710.6 576.4Z" fill="none" stroke="#0e2f66" stroke-width="1.4"/></svg>
<svg class="a" style="left:752px;top:568px" width="16" height="16"><path d="M5.5 2.3H3.6V9.4H5.5M10.6 2.3H12.5V9.4H10.6" fill="none" stroke="#0e2f5e" stroke-width="1.2"/><path d="M2.5 13.5H13.5" stroke="#1a5aa8" stroke-width="1.1"/><path d="M1 13.5l2.8-2v4zM15 13.5l-2.8-2v4z" fill="#1a5aa8"/></svg>
<svg class="a" style="left:794px;top:568px" width="16" height="16"><path d="M8.3 1L12.6 5.2 8.3 9.4 4 5.2Z" fill="none" stroke="#0e2f5e" stroke-width="1.2"/><path d="M3.6 9.6L8.3 14 13 9.6" fill="none" stroke="#0e3a78" stroke-width="2.6"/></svg>
<svg class="a" style="left:837px;top:568px" width="14" height="16"><rect x="1.5" y="1.5" width="11" height="3" fill="none" stroke="#0e2f66" stroke-width="1.5"/><rect x="1.5" y="6.5" width="11" height="3" fill="none" stroke="#0e2f66" stroke-width="1.5"/><rect x="1.5" y="11.5" width="11" height="3" fill="none" stroke="#0e2f66" stroke-width="1.5"/></svg>
<div class="a" style="left:851px;top:570.5px;font-size:11.5px;color:#111;transform:scaleX(0.925);transform-origin:0 0;white-space:nowrap">Part Statistics</div>
<div class="a" style="left:8px;top:594.5px;width:933px;height:17.5px;background:#d3e1f0;border-top:1px solid #fff;border-bottom:1px solid #8a8a8a"></div>
<div class="a" style="left:741px;top:596px;width:199px;height:15px;border-top:1px solid #a0a0a0;border-left:1px solid #a0a0a0;border-right:1px solid #fff;border-bottom:1px solid #fff;box-shadow:inset 1px 0 0 #fff"></div>
<div class="a" style="left:12px;top:597px;font-size:12px;color:#111;white-space:pre;transform:scaleX(0.908);transform-origin:0 0">Oneup Instance of Shelf  with Id:  26</div>
</body></html>
